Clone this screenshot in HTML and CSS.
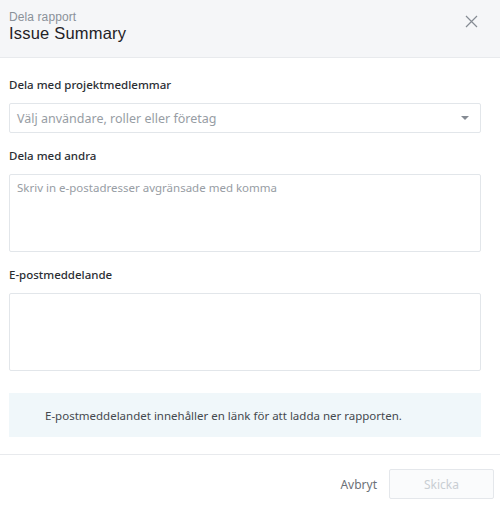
FILE: index.html
```html
<!DOCTYPE html>
<html lang="sv">
<head>
<meta charset="utf-8">
<title>Dela rapport</title>
<link rel="stylesheet" href="styles.css">
</head>
<body>
<div class="dialog">
  <header class="head">
    <div class="titles">
      <div class="subtitle">Dela rapport</div>
      <div class="title">Issue Summary</div>
    </div>
    <button class="close" aria-label="Stäng">
      <svg width="13" height="13" viewBox="0 0 13 13"><path d="M1 1L12 12M12 1L1 12" stroke="#858b93" stroke-width="1.2" fill="none"/></svg>
    </button>
  </header>
  <main class="body">
    <div class="field">
      <div class="label">Dela med projektmedlemmar</div>
      <div class="select">
        <span class="placeholder">Välj användare, roller eller företag</span>
        <svg class="caret" width="8" height="4" viewBox="0 0 8 4"><path d="M0 0H8L4 4Z" fill="#858b93"/></svg>
      </div>
    </div>
    <div class="field">
      <div class="label">Dela med andra</div>
      <div class="textarea"><span class="placeholder">Skriv in e-postadresser avgränsade med komma</span></div>
    </div>
    <div class="field">
      <div class="label">E-postmeddelande</div>
      <div class="textarea"></div>
    </div>
    <div class="info">E-postmeddelandet innehåller en länk för att ladda ner rapporten.</div>
  </main>
  <footer class="foot">
    <button class="btn-link">Avbryt</button>
    <button class="btn-primary" disabled>Skicka</button>
  </footer>
</div>
</body>
</html>
```
FILE: styles.css
```css
html, body {
  margin: 0;
  padding: 0;
  background: #ffffff;
}
body {
  font-family: "Noto Sans", "Open Sans", sans-serif;
  color: #3c3c3c;
  width: 500px;
  height: 507px;
  overflow: hidden;
}
.dialog {
  display: flex;
  flex-direction: column;
  height: 507px;
}
.head {
  background: #f5f6f8;
  border-bottom: 1px solid #e8eaed;
  height: 58px;
  box-sizing: border-box;
  display: flex;
  justify-content: space-between;
  align-items: flex-start;
  padding: 10px 22px 0 9px;
}
.titles {
  font-family: "Liberation Sans", Arial, sans-serif;
}
.subtitle {
  font-size: 12px;
  line-height: normal;
  color: #8a9199;
  font-weight: normal;
  letter-spacing: 0.1px;
}
.title {
  font-size: 16.5px;
  line-height: normal;
  color: #1f2226;
  letter-spacing: 0.2px;
}
.close {
  border: 0;
  background: none;
  padding: 0;
  margin-top: 5px;
  width: 13px;
  height: 13px;
  display: flex;
}
.body {
  padding: 19px 19px 0 9px;
  display: flex;
  flex-direction: column;
}
.field {
  display: flex;
  flex-direction: column;
  margin-bottom: 15px;
}
.label {
  font-size: 11.5px;
  line-height: 16px;
  font-weight: 500;
  color: #2b2e33;
  margin-bottom: 10px;
}
.select {
  height: 30px;
  box-sizing: border-box;
  border: 1px solid #e2e6ea;
  border-radius: 2px;
  display: flex;
  align-items: center;
  justify-content: space-between;
  padding: 0 11px 0 7px;
}
.placeholder {
  font-size: 12.5px;
  color: #979da4;
}
.textarea {
  height: 78px;
  box-sizing: border-box;
  border: 1px solid #e2e6ea;
  border-radius: 2px;
  padding: 2px 7px;
  line-height: 18px;
}
.textarea .placeholder {
  font-size: 11.5px;
}
.info {
  margin-top: 7px;
  height: 44px;
  background: #f0f7fa;
  display: flex;
  align-items: center;
  padding-left: 36px;
  font-size: 11.5px;
  color: #45494e;
}
.foot {
  margin-top: 17px;
  border-top: 1px solid #e8eaed;
  display: flex;
  justify-content: flex-end;
  align-items: center;
  padding: 14px 6px 0 0;
  gap: 12px;
}
.btn-link {
  border: 0;
  background: none;
  font-family: inherit;
  font-size: 12px;
  color: #6c7177;
  padding: 0;
}
.btn-primary {
  width: 105px;
  height: 30px;
  border: 1px solid #e4e7eb;
  border-radius: 2px;
  background: #fafbfc;
  font-family: inherit;
  font-size: 12px;
  color: #c9ced3;
}
```
